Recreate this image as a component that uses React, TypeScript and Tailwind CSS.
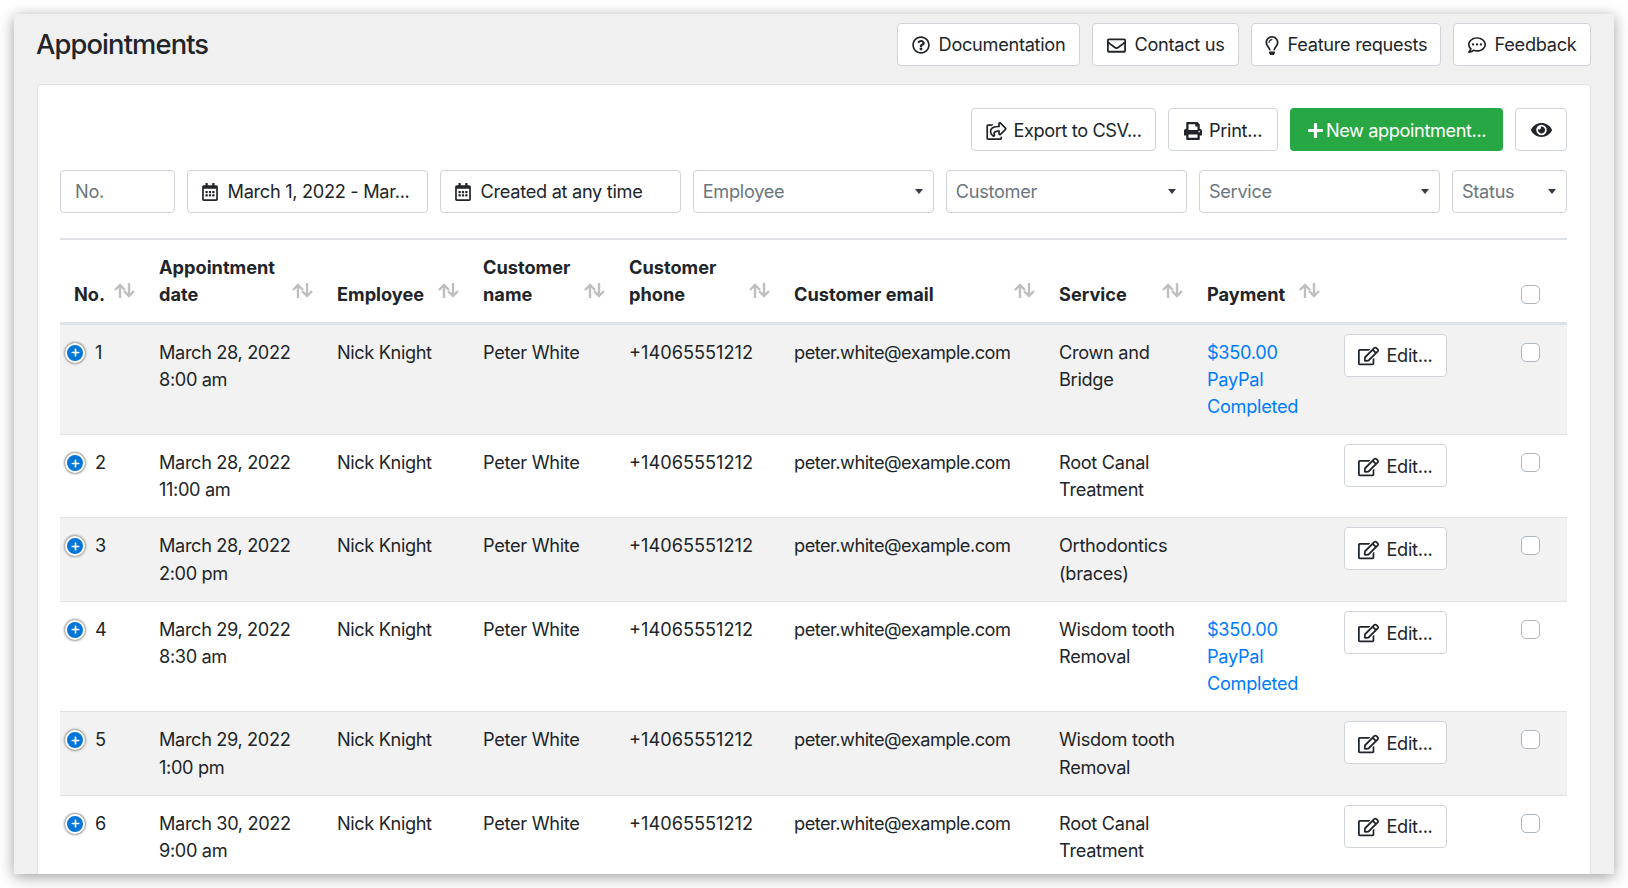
import type { ReactNode } from "react";
import {
  FaEye,
  FaPlus,
  FaPrint,
  FaRegCalendarAlt,
  FaRegCommentDots,
  FaRegEdit,
  FaRegEnvelope,
  FaRegLightbulb,
  FaRegQuestionCircle,
  FaRegShareSquare,
} from "react-icons/fa";

interface Appointment {
  no: number;
  date: string;
  time: string;
  service: string[];
  paid?: boolean;
}

const appointments: Appointment[] = [
  { no: 1, date: "March 28, 2022", time: "8:00 am", service: ["Crown and", "Bridge"], paid: true },
  { no: 2, date: "March 28, 2022", time: "11:00 am", service: ["Root Canal", "Treatment"] },
  { no: 3, date: "March 28, 2022", time: "2:00 pm", service: ["Orthodontics", "(braces)"] },
  { no: 4, date: "March 29, 2022", time: "8:30 am", service: ["Wisdom tooth", "Removal"], paid: true },
  { no: 5, date: "March 29, 2022", time: "1:00 pm", service: ["Wisdom tooth", "Removal"] },
  { no: 6, date: "March 30, 2022", time: "9:00 am", service: ["Root Canal", "Treatment"] },
];

const columns = [
  "No.",
  "Appointment date",
  "Employee",
  "Customer name",
  "Customer phone",
  "Customer email",
  "Service",
  "Payment",
];

function Button({ icon, children, className = "" }: { icon?: ReactNode; children?: ReactNode; className?: string }) {
  return (
    <button
      type="button"
      className={`flex h-[43px] items-center justify-center rounded-[4px] border border-[#ced4da] bg-white text-[#212529] ${className}`}
    >
      {icon}
      {children}
    </button>
  );
}

function Select({ label, className = "" }: { label: string; className?: string }) {
  return (
    <div
      className={`flex h-[43px] items-center justify-between rounded-[4px] border border-[#ced4da] bg-white pl-[9px] pr-[10px] text-[#6c757d] ${className}`}
    >
      <span>{label}</span>
      <span className="h-0 w-0 border-x-[4px] border-t-[5px] border-x-transparent border-t-[#343a40]" />
    </div>
  );
}

function SortIcon() {
  return (
    <svg
      viewBox="0 0 21 15"
      className="absolute bottom-[24px] right-[10px] h-[15px] w-[21px]"
      fill="none"
      stroke="#bfbfbf"
      strokeWidth="2.4"
    >
      <path d="M6 15V2M1 7l5-5 5 5" />
      <path d="M15 0v13M10 8l5 5 5-5" />
    </svg>
  );
}

function Checkbox() {
  return (
    <input
      type="checkbox"
      readOnly
      className="block h-[19px] w-[19px] appearance-none rounded-[5px] border border-[#adb5bd] bg-white"
    />
  );
}

export default function App() {
  return (
    <div className="h-[888px] overflow-hidden bg-white p-[14px] font-['Inter',sans-serif] text-[18.2px] leading-[27.3px] tracking-[-0.3px] text-[#212529]">
      <div className="h-[860px] overflow-hidden bg-[#f0f0f0] px-[23px] shadow-[0_3px_14px_rgba(0,0,0,0.38)]">
        <div className="flex items-start justify-between pb-[18px] pt-[9px]">
          <h1 className="-ml-px text-[27.3px] font-medium leading-[43px] tracking-[-0.87px] text-[#212529]">Appointments</h1>
          <div className="flex gap-[12px]">
            <Button className="w-[183px] gap-[9px] pt-px" icon={<FaRegQuestionCircle className="h-[18px] w-[18px]" />}>
              Documentation
            </Button>
            <Button className="w-[147px] gap-[9px] pt-px" icon={<FaRegEnvelope className="h-[19px] w-[19px]" />}>
              Contact us
            </Button>
            <Button className="w-[190px] gap-[9px] pt-px" icon={<FaRegLightbulb className="h-[19px] w-[14px]" />}>
              Feature requests
            </Button>
            <Button className="w-[138px] gap-[9px] pt-px" icon={<FaRegCommentDots className="h-[18px] w-[18px]" />}>
              Feedback
            </Button>
          </div>
        </div>

        <div className="rounded-t-[4px] border border-[#dfe1e5] bg-white pl-[22px] pr-[23px] pt-[23px]">
          <div className="flex justify-end gap-[12px]">
            <Button
              className="w-[185px] gap-[7px] pt-[2px] tracking-[-0.4px]"
              icon={<FaRegShareSquare className="h-[18px] w-[21px]" />}
            >
              Export to CSV...
            </Button>
            <Button className="w-[110px] gap-[7px] pt-[2px]" icon={<FaPrint className="h-[18px] w-[18px]" />}>
              Print...
            </Button>
            <button
              type="button"
              className="flex h-[43px] w-[213px] items-center justify-center gap-[2px] rounded-[4px] bg-[#28a745] pt-[2px] tracking-[-0.4px] text-white"
            >
              <FaPlus className="h-[17px] w-[17px]" />
              New appointment...
            </button>
            <Button className="w-[52px]" icon={<FaEye className="h-[20px] w-[21px]" />} />
          </div>

          <div className="mt-[19px] flex gap-[11.5px]">
            <div className="flex h-[43px] w-[115px] items-center rounded-[4px] border border-[#ced4da] pl-[14px] text-[#6c757d]">
              No.
            </div>
            <div className="flex h-[43px] w-[241.6px] items-center gap-[10px] rounded-[4px] border border-[#ced4da] pl-[14px]">
              <FaRegCalendarAlt className="h-[18px] w-[16px]" />
              March 1, 2022 - Mar...
            </div>
            <div className="flex h-[43px] w-[241.6px] items-center gap-[10px] rounded-[4px] border border-[#ced4da] pl-[14px]">
              <FaRegCalendarAlt className="h-[18px] w-[16px]" />
              Created at any time
            </div>
            <Select label="Employee" className="w-[241.6px]" />
            <Select label="Customer" className="w-[241.6px]" />
            <Select label="Service" className="w-[241.6px]" />
            <Select label="Status" className="w-[115px]" />
          </div>

          <table className="mt-[25px] w-full table-fixed border-collapse">
            <colgroup>
              <col className="w-[85px]" />
              <col className="w-[178px]" />
              <col className="w-[146px]" />
              <col className="w-[146px]" />
              <col className="w-[165px]" />
              <col className="w-[265px]" />
              <col className="w-[148px]" />
              <col className="w-[137px]" />
              <col className="w-[177px]" />
              <col className="w-[60px]" />
            </colgroup>
            <thead>
              <tr className="border-b-[3px] border-t-[2px] border-[#dee2e6]">
                {columns.map((label) => (
                  <th
                    key={label}
                    className="relative pb-[13px] pl-[14px] pr-[30px] pt-[14px] text-left align-bottom font-bold tracking-normal"
                  >
                    {label}
                    <SortIcon />
                  </th>
                ))}
                <th />
                <th className="px-[14px] pb-[18px] align-bottom">
                  <Checkbox />
                </th>
              </tr>
            </thead>
            <tbody>
              {appointments.map((row) => (
                <tr key={row.no} className={`border-b border-[#dee2e6] ${row.no % 2 === 1 ? "bg-[#f2f2f2]" : "bg-white"}`}>
                  <td className="relative px-[14px] pb-[13.7px] pt-[14px] align-top">
                    <span className="absolute left-[5px] top-[18px] flex h-[20px] w-[20px] items-center justify-center rounded-full border-2 border-white bg-[#0275d8] text-white shadow-[0_0_2px_1px_#9a9a9a]">
                      <FaPlus className="h-[9px] w-[9px]" />
                    </span>
                    <span className="pl-[21px] tracking-normal">{row.no}</span>
                  </td>
                  <td className="px-[14px] pb-[13.7px] pt-[14px] align-top tracking-[-0.36px]">
                    {row.date}
                    <br />
                    {row.time}
                  </td>
                  <td className="px-[14px] pb-[13.7px] pt-[14px] align-top tracking-[-0.38px]">Nick Knight</td>
                  <td className="px-[14px] pb-[13.7px] pt-[14px] align-top">Peter White</td>
                  <td className="px-[14px] pb-[13.7px] pt-[14px] align-top tracking-normal">+14065551212</td>
                  <td className="px-[14px] pb-[13.7px] pt-[14px] align-top tracking-[-0.5px]">peter.white@example.com</td>
                  <td className="px-[14px] pb-[13.7px] pt-[14px] align-top">
                    {row.service[0]}
                    <br />
                    {row.service[1]}
                  </td>
                  <td className="px-[14px] pb-[13.7px] pt-[14px] align-top text-[#007bff]">
                    {row.paid && (
                      <>
                        $350.00
                        <br />
                        PayPal
                        <br />
                        Completed
                      </>
                    )}
                  </td>
                  <td className="px-[14px] pb-[9px] pt-[9px] align-top">
                    <Button className="w-[103px] gap-[7px] pt-[2px]" icon={<FaRegEdit className="h-[20px] w-[21px]" />}>
                      Edit...
                    </Button>
                  </td>
                  <td className="px-[14px] pt-[18px] align-top">
                    <Checkbox />
                  </td>
                </tr>
              ))}
            </tbody>
          </table>
        </div>
      </div>
    </div>
  );
}
